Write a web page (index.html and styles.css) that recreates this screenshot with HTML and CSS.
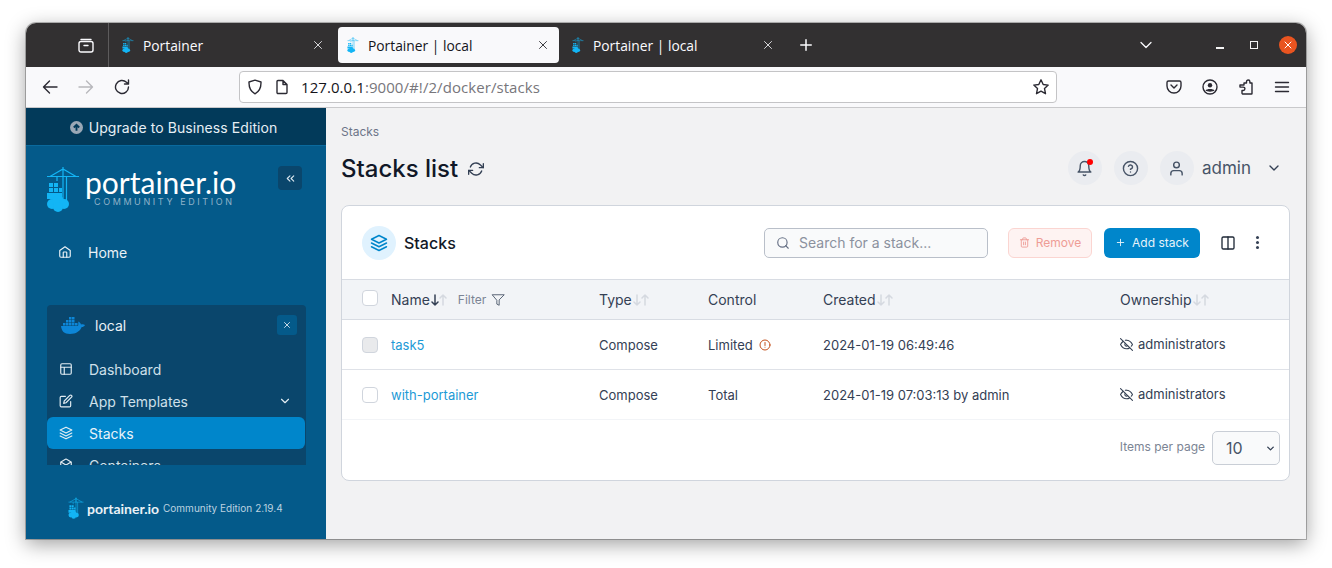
FILE: index.html
```html
<!DOCTYPE html>
<html lang="en">
<head>
  <meta charset="UTF-8" />
  <title>Portainer | local</title>
  <link rel="stylesheet" href="styles.css">
</head>
<body>
  <svg class="sprite" aria-hidden="true">
    <symbol id="i-home" viewBox="0 0 24 24"><path d="M3 9.500 12 3l9 6.500V19a2 2 0 0 1-2 2H5a2 2 0 0 1-2-2z"/><path d="M9 21v-8a1 1 0 0 1 1-1h4a1 1 0 0 1 1 1v8"/></symbol>
    <symbol id="i-layout" viewBox="0 0 24 24"><rect x="3" y="3" width="18" height="18" rx="2"/><path d="M3 9h18M9 21V9"/></symbol>
    <symbol id="i-edit" viewBox="0 0 24 24"><path d="M11 4H4a2 2 0 0 0-2 2v14a2 2 0 0 0 2 2h14a2 2 0 0 0 2-2v-7"/><path d="M18.500 2.500a2.121 2.121 0 0 1 3 3L12 15l-4 1 1-4z"/></symbol>
    <symbol id="i-layers" viewBox="0 0 24 24"><path d="M12 2 2 7l10 5 10-5z"/><path d="m2 17 10 5 10-5"/><path d="m2 12 10 5 10-5"/></symbol>
    <symbol id="i-box" viewBox="0 0 24 24"><path d="M21 16V8a2 2 0 0 0-1-1.730l-7-4a2 2 0 0 0-2 0l-7 4A2 2 0 0 0 3 8v8a2 2 0 0 0 1 1.730l7 4a2 2 0 0 0 2 0l7-4A2 2 0 0 0 21 16z"/><path d="M3.270 6.960 12 12l8.730-5.040M12 22V12"/></symbol>
    <symbol id="i-refresh" viewBox="0 0 24 24"><path d="M23 4v6h-6M1 20v-6h6"/><path d="M3.510 9a9 9 0 0 1 14.850-3.360L23 10M1 14l4.640 4.360A9 9 0 0 0 20.490 15"/></symbol>
    <symbol id="i-bell" viewBox="0 0 24 24"><path d="M18 8A6 6 0 0 0 6 8c0 7-3 9-3 9h18s-3-2-3-9"/><path d="M13.730 21a2 2 0 0 1-3.460 0"/></symbol>
    <symbol id="i-help" viewBox="0 0 24 24"><circle cx="12" cy="12" r="10"/><path d="M9.090 9a3 3 0 0 1 5.830 1c0 2-3 3-3 3M12 17h.01"/></symbol>
    <symbol id="i-user" viewBox="0 0 24 24"><path d="M20 21v-2a4 4 0 0 0-4-4H8a4 4 0 0 0-4 4v2"/><circle cx="12" cy="7" r="4"/></symbol>
    <symbol id="i-chevron" viewBox="0 0 24 24"><path d="m6 9 6 6 6-6"/></symbol>
    <symbol id="i-chevrons-left" viewBox="0 0 24 24"><path d="m11 17-5-5 5-5M18 17l-5-5 5-5"/></symbol>
    <symbol id="i-close" viewBox="0 0 24 24"><path d="M18 6 6 18M6 6l12 12"/></symbol>
    <symbol id="i-search" viewBox="0 0 24 24"><circle cx="11" cy="11" r="8"/><path d="m21 21-4.350-4.350"/></symbol>
    <symbol id="i-trash" viewBox="0 0 24 24"><path d="M3 6h18"/><path d="M19 6v14a2 2 0 0 1-2 2H7a2 2 0 0 1-2-2V6m3 0V4a2 2 0 0 1 2-2h4a2 2 0 0 1 2 2v2"/><path d="M10 11v6M14 11v6"/></symbol>
    <symbol id="i-plus" viewBox="0 0 24 24"><path d="M12 5v14M5 12h14"/></symbol>
    <symbol id="i-columns" viewBox="0 0 24 24"><rect x="3" y="3" width="18" height="18" rx="2"/><path d="M12 3v18"/></symbol>
    <symbol id="i-filter" viewBox="0 0 24 24"><path d="M22 3H2l8 9.460V19l4 2v-8.540z"/></symbol>
    <symbol id="i-eye-off" viewBox="0 0 24 24"><path d="M17.940 17.940A10.070 10.070 0 0 1 12 20c-7 0-11-8-11-8a18.450 18.450 0 0 1 5.060-5.940M9.900 4.240A9.120 9.120 0 0 1 12 4c7 0 11 8 11 8a18.500 18.500 0 0 1-2.160 3.190m-6.720-1.070a3 3 0 1 1-4.240-4.240"/><path d="m1 1 22 22"/></symbol>
    <symbol id="i-alert" viewBox="0 0 24 24"><circle cx="12" cy="12" r="10"/><path d="M12 7v6M12 16.500h.01"/></symbol>
    <symbol id="i-down" viewBox="0 0 8 12"><path d="M4 1v10M1 8l3 3 3-3"/></symbol>
    <symbol id="i-up" viewBox="0 0 8 12"><path d="M4 11V1M1 4l3-3 3 3"/></symbol>
    <symbol id="i-logo" viewBox="0 0 34 46">
      <path class="logo-line" d="M1 10.500h32M17 1v10M4 10.500 17 3l13 7.500M17 1v33M20.500 10.500v24M11 11v4"/>
      <path class="logo-fill" d="M3 17h4v4H3zM8 17h4v4H8zM3 22h4v4H3zM8 22h4v4H8zM13 22h3v4h-3zM1 27h15v6H1z"/>
      <circle class="logo-fill" cx="6" cy="38" r="5"/><circle class="logo-fill" cx="12" cy="35.500" r="6"/><circle class="logo-fill" cx="18" cy="38" r="5"/><circle class="logo-fill" cx="12" cy="41" r="5"/>
    </symbol>
  </svg>

  <div class="window">
    <div class="tabbar">
      <div class="tab-view">
        <svg class="ff-icon light" width="16" height="16" viewBox="0 0 16 16"><rect x="1" y="4.500" width="14" height="10.500" rx="2"/><path d="M3 2.500h10M6 8.500h4"/></svg>
      </div>
      <div class="tab">
        <svg class="tab-logo" width="14" height="16"><use href="#i-logo"/></svg>
        <span class="tab-title">Portainer</span>
        <svg class="icon tab-x" width="16" height="16"><use href="#i-close"/></svg>
      </div>
      <div class="tab active">
        <svg class="tab-logo" width="14" height="16"><use href="#i-logo"/></svg>
        <span class="tab-title">Portainer | local</span>
        <svg class="icon tab-x" width="16" height="16"><use href="#i-close"/></svg>
      </div>
      <div class="tab">
        <svg class="tab-logo" width="14" height="16"><use href="#i-logo"/></svg>
        <span class="tab-title">Portainer | local</span>
        <svg class="icon tab-x" width="16" height="16"><use href="#i-close"/></svg>
      </div>
      <svg class="icon new-tab" width="18" height="18"><use href="#i-plus"/></svg>
      <svg class="icon tab-list" width="20" height="20"><use href="#i-chevron"/></svg>
      <div class="win-controls">
        <span class="win-min"></span>
        <span class="win-max"></span>
        <span class="win-close"><svg class="icon" width="14" height="14"><use href="#i-close"/></svg></span>
      </div>
    </div>

    <div class="toolbar">
      <svg class="ff-icon" width="16" height="16" viewBox="0 0 16 16"><path d="M15 8H1.500M7.500 2l-6 6 6 6"/></svg>
      <svg class="ff-icon faded" width="16" height="16" viewBox="0 0 16 16"><path d="M1 8h13.500M8.500 2l6 6-6 6"/></svg>
      <svg class="ff-icon" width="16" height="16" viewBox="0 0 16 16"><path d="M14.500 8a6.500 6.500 0 1 1-2-4.700L14.500 5M14.500 1v4h-4"/></svg>
      <div class="urlbar">
        <svg class="ff-icon" width="16" height="16" viewBox="0 0 16 16"><path d="M8 1.200 14 3c.2 5.500-1.500 9.500-6 11.800C3.500 12.500 1.800 8.500 2 3z"/></svg>
        <svg class="ff-icon" width="14" height="16" viewBox="0 0 14 16"><path d="M2 2.500a1 1 0 0 1 1-1h5l4 4v8a1 1 0 0 1-1 1H3a1 1 0 0 1-1-1zM8 1.500v4h4"/></svg>
        <span class="url"><b>127.0.0.1</b>:9000/#!/2/docker/stacks</span>
        <svg class="ff-icon" width="18" height="18" viewBox="0 0 18 18"><path d="m9 1.800 2.200 4.700 5 .6-3.700 3.500 1 5.100L9 13.200l-4.500 2.500 1-5.100L1.800 7.100l5-.6z"/></svg>
      </div>
      <div class="toolbar-right">
        <svg class="ff-icon" width="16" height="16" viewBox="0 0 16 16"><path d="M2.500 2h11A1.500 1.500 0 0 1 15 3.500V7a7 7 0 0 1-14 0V3.500A1.500 1.500 0 0 1 2.500 2zM5 6l3 3 3-3"/></svg>
        <svg class="ff-icon" width="16" height="16" viewBox="0 0 16 16"><circle cx="8" cy="8" r="7"/><circle class="solid" cx="8" cy="6.200" r="2.200"/><path class="solid" d="M3.500 11.500c1-2 8-2 9 0-1.500 1.500-7.500 1.500-9 0z"/></svg>
        <svg class="ff-icon" width="16" height="16" viewBox="0 0 16 16"><path d="M6 4h2.500V2.700a1.700 1.700 0 0 1 3.400 0V4H14v10.500a.5.500 0 0 1-.5.500H5a1 1 0 0 1-1-1v-2.500h1.200a1.700 1.700 0 0 0 0-3.400H2V6h4z"/></svg>
        <svg class="ff-icon" width="16" height="16" viewBox="0 0 16 16"><path d="M1.500 3.500h13M1.500 8h13M1.500 12.500h13"/></svg>
      </div>
    </div>

    <div class="app">
      <aside class="sidebar">
        <div class="upgrade">
          <svg class="upgrade-icon" width="13" height="13" viewBox="0 0 24 24"><circle cx="12" cy="12" r="12"/><path d="m7 12 5-5 5 5M12 7.500V18"/></svg>
          <span>Upgrade to Business Edition</span>
        </div>
        <div class="brand">
          <svg class="brand-logo" width="34" height="46"><use href="#i-logo"/></svg>
          <div class="brand-text">
            <div class="brand-name">portainer.io</div>
            <div class="brand-sub">COMMUNITY EDITION</div>
          </div>
          <button class="collapse" aria-label="Collapse"><svg class="icon" width="13" height="13"><use href="#i-chevrons-left"/></svg></button>
        </div>
        <a class="nav-home">
          <svg class="icon" width="14" height="14"><use href="#i-home"/></svg>
          <span>Home</span>
        </a>
        <div class="env">
          <div class="env-head">
            <svg class="whale" width="24" height="17" viewBox="0 0 24 17"><path d="M5 3h2.500v2.500H5zM8 3h2.500v2.500H8zM11 3h2.500v2.500H11zM8 0h2.500v2.500H8zM11 0h2.500v2.500H11zM2 6h2.500v2.500H2zM5 6h2.500v2.500H5zM8 6h2.500v2.500H8zM11 6h2.500v2.500H11zM14 6h2.500v2.500H14z"/><path d="M0 9h17c.5-1 .2-3 .3-4.500 1.200.5 2.400 1.800 2.700 3 1.200-.5 2.800-.4 4 .4-.7 1.500-2 2-3.300 2.200C19 14.500 15 17 9 17 3 17 .5 14 0 9z"/></svg>
            <span class="env-name">local</span>
            <button class="env-close" aria-label="Close"><svg class="icon" width="10" height="10"><use href="#i-close"/></svg></button>
          </div>
          <a class="nav-item"><svg class="icon" width="14" height="14"><use href="#i-layout"/></svg><span>Dashboard</span></a>
          <a class="nav-item"><svg class="icon" width="14" height="14"><use href="#i-edit"/></svg><span>App Templates</span><svg class="icon nav-caret" width="14" height="14"><use href="#i-chevron"/></svg></a>
          <a class="nav-item current"><svg class="icon" width="14" height="14"><use href="#i-layers"/></svg><span>Stacks</span></a>
          <a class="nav-item"><svg class="icon" width="14" height="14"><use href="#i-box"/></svg><span>Containers</span></a>
        </div>
        <div class="side-foot">
          <svg width="16" height="22"><use href="#i-logo"/></svg>
          <span class="foot-name">portainer.io</span>
          <span class="foot-meta">Community Edition</span>
          <span class="foot-meta foot-version">2.19.4</span>
        </div>
      </aside>

      <main class="content">
        <div class="crumb">Stacks</div>
        <div class="page-head">
          <h1>Stacks list</h1>
          <svg class="icon title-refresh" width="16" height="16"><use href="#i-refresh"/></svg>
          <div class="user-menu">
            <span class="round"><svg class="icon" width="17" height="17"><use href="#i-bell"/></svg><i class="dot"></i></span>
            <span class="round"><svg class="icon" width="17" height="17"><use href="#i-help"/></svg></span>
            <span class="round"><svg class="icon" width="17" height="17"><use href="#i-user"/></svg></span>
            <span class="user-name">admin</span>
            <svg class="icon user-caret" width="16" height="16"><use href="#i-chevron"/></svg>
          </div>
        </div>

        <section class="card">
          <div class="card-head">
            <span class="card-badge"><svg class="icon" width="18" height="18"><use href="#i-layers"/></svg></span>
            <h2>Stacks</h2>
            <div class="search">
              <svg class="icon" width="14" height="14"><use href="#i-search"/></svg>
              <span>Search for a stack...</span>
            </div>
            <button class="btn btn-remove"><svg class="icon" width="11" height="11"><use href="#i-trash"/></svg>Remove</button>
            <button class="btn btn-add"><svg class="icon" width="11" height="11"><use href="#i-plus"/></svg>Add stack</button>
            <svg class="icon head-tool" width="16" height="16"><use href="#i-columns"/></svg>
            <span class="kebab"><i></i><i></i><i></i></span>
          </div>

          <table class="stacks">
            <colgroup><col class="c-check"><col class="c-name"><col class="c-type"><col class="c-control"><col class="c-created"><col></colgroup>
            <thead>
              <tr>
                <th><span class="check"></span></th>
                <th>Name<span class="sort"><svg class="icon active" width="8" height="12"><use href="#i-down"/></svg><svg class="icon" width="8" height="12"><use href="#i-up"/></svg></span><span class="filter">Filter<svg class="icon" width="14" height="14"><use href="#i-filter"/></svg></span></th>
                <th>Type<span class="sort"><svg class="icon" width="8" height="12"><use href="#i-down"/></svg><svg class="icon" width="8" height="12"><use href="#i-up"/></svg></span></th>
                <th>Control</th>
                <th>Created<span class="sort"><svg class="icon" width="8" height="12"><use href="#i-down"/></svg><svg class="icon" width="8" height="12"><use href="#i-up"/></svg></span></th>
                <th>Ownership<span class="sort"><svg class="icon" width="8" height="12"><use href="#i-down"/></svg><svg class="icon" width="8" height="12"><use href="#i-up"/></svg></span></th>
              </tr>
            </thead>
            <tbody>
              <tr>
                <td><span class="check off"></span></td>
                <td><a class="stack-link">task5</a></td>
                <td>Compose</td>
                <td>Limited <svg class="icon warn" width="12" height="12"><use href="#i-alert"/></svg></td>
                <td>2024-01-19 06:49:46</td>
                <td class="owner"><svg class="icon" width="13" height="13"><use href="#i-eye-off"/></svg>administrators</td>
              </tr>
              <tr>
                <td><span class="check"></span></td>
                <td><a class="stack-link">with-portainer</a></td>
                <td>Compose</td>
                <td>Total</td>
                <td>2024-01-19 07:03:13 by admin</td>
                <td class="owner"><svg class="icon" width="13" height="13"><use href="#i-eye-off"/></svg>administrators</td>
              </tr>
            </tbody>
          </table>

          <div class="card-foot">
            <span class="foot-label">Items per page</span>
            <div class="per-page">10<svg class="icon" width="11" height="11"><use href="#i-chevron"/></svg></div>
          </div>
        </section>
      </main>
    </div>
  </div>
</body>
</html>
```

FILE: styles.css
```css
* {
  box-sizing: border-box;
}

html, body {
  height: 100%;
}

body {
  margin: 0;
  padding: 23px 26px 28px;
  background-color: #ffffff;
  font-family: Inter, "Liberation Sans", sans-serif;
  overflow: hidden;
}

.sprite {
  display: none;
}

.icon {
  fill: none;
  stroke: currentColor;
  stroke-width: 2;
  stroke-linecap: round;
  stroke-linejoin: round;
  flex: none;
}

.window {
  height: 516px;
  display: flex;
  flex-direction: column;
  border-radius: 10px 10px 0 0;
  overflow: hidden;
  box-shadow: 0 0 0 1px rgba(0, 0, 0, 0.25), 0 5px 20px rgba(0, 0, 0, 0.38);
}

/* browser chrome */
.tabbar {
  height: 44px;
  flex: none;
  display: flex;
  align-items: center;
  background-color: #323031;
  color: #fbfbfe;
  font-family: "Open Sans", sans-serif;
}

.tab-view {
  width: 83px;
  height: 44px;
  display: flex;
  align-items: center;
  justify-content: flex-end;
  padding-right: 14px;
  border-right: 1px solid #5d5b5c;
}

.ff-icon {
  fill: none;
  stroke: #2b2a33;
  stroke-width: 1.4;
  stroke-linecap: round;
  stroke-linejoin: round;
  flex: none;
}

.ff-icon.light {
  stroke: #fbfbfe;
}

.ff-icon.faded {
  stroke: #b8b8bc;
}

.ff-icon .solid {
  fill: #2b2a33;
  stroke: none;
}

.tab {
  width: 221px;
  height: 36px;
  margin-left: 4px;
  display: flex;
  align-items: center;
  padding: 0 9px 0 8px;
  border-radius: 4px;
  font-size: 13.8px;
}

.tab.active {
  background-color: #f9f9fb;
  color: #15141a;
}

.tab-logo {
  flex: none;
}

.tab-title {
  margin-left: 8px;
  flex: 1;
}

.tab-x {
  width: 14px;
  height: 14px;
  stroke-width: 1.4;
}

.new-tab {
  margin-left: 13px;
}

.tab-list {
  margin-left: 321px;
  stroke-width: 1.5;
}

.win-controls {
  margin-left: auto;
  display: flex;
  align-items: center;
  gap: 26px;
  padding-right: 9px;
}

.win-min {
  width: 8px;
  height: 1.5px;
  margin-top: 6px;
  background-color: #f4f4f4;
}

.win-max {
  width: 8px;
  height: 8px;
  border: 1.5px solid #f4f4f4;
}

.win-close {
  width: 18px;
  height: 18px;
  margin-left: -5px;
  display: flex;
  align-items: center;
  justify-content: center;
  border-radius: 50%;
  background-color: #e95420;
  color: #ffffff;
}

.win-close svg {
  width: 12px;
  height: 12px;
}

.toolbar {
  height: 41px;
  flex: none;
  display: flex;
  align-items: center;
  padding-left: 16px;
  gap: 20px;
  background-color: #f9f9fb;
  border-bottom: 1px solid #c9c9cb;
}

.urlbar {
  width: 818px;
  height: 32px;
  margin-left: 89px;
  display: flex;
  align-items: center;
  padding: 0 6px 0 7px;
  gap: 12px;
  background-color: #ffffff;
  border: 1px solid #c4c4c6;
  border-radius: 4px;
  font-family: "Open Sans", sans-serif;
}

.url {
  flex: 1;
  font-size: 15px;
  letter-spacing: 0.07px;
  color: #77767b;
}

.url b {
  font-weight: 400;
  color: #15141a;
}

.toolbar-right {
  margin-left: 89px;
  display: flex;
  gap: 20px;
}

/* sidebar */
.app {
  flex: 1;
  min-height: 0;
  display: flex;
  background-color: #f2f2f3;
}

.sidebar {
  width: 300px;
  flex: none;
  display: flex;
  flex-direction: column;
  background-color: #045a8a;
  color: #ffffff;
}

.upgrade {
  height: 38px;
  display: flex;
  align-items: center;
  justify-content: center;
  gap: 6px;
  padding: 1px 5px 0 0;
  background-color: #023a5a;
  border-bottom: 1px solid #0a6a9e;
  font-size: 14px;
  letter-spacing: 0.08px;
  color: #e6eff5;
}

.upgrade-icon circle {
  fill: #9aa8b6;
}

.upgrade-icon path {
  fill: none;
  stroke: #023a5a;
  stroke-width: 3.5;
}

.brand {
  height: 90px;
  display: flex;
  align-items: flex-start;
  padding: 20px 24px 0 20px;
}

.logo-line {
  fill: none;
  stroke: #13b5f5;
  stroke-width: 1.2;
}

.logo-fill {
  fill: #13b5f5;
}

.brand-text {
  margin: 2px 0 0 5px;
  flex: 1;
}

.brand-name {
  font-family: Lato, sans-serif;
  font-size: 30px;
  line-height: 28px;
}

.brand-sub {
  margin-left: 9px;
  font-size: 9px;
  line-height: 11px;
  letter-spacing: 2.6px;
  color: #8fb2c9;
}

.collapse {
  width: 24px;
  height: 24px;
  padding: 0;
  display: flex;
  align-items: center;
  justify-content: center;
  background-color: #0a466c;
  border: 0;
  border-radius: 4px;
  color: #dce8f0;
}

.nav-home {
  height: 32px;
  display: flex;
  align-items: center;
  gap: 16px;
  padding-left: 32px;
  font-size: 14px;
  color: #eaf1f6;
}

.env {
  width: 259px;
  height: 160px;
  margin: 37px 0 0 21px;
  overflow: hidden;
  background-color: #0a466c;
  border-radius: 4px 4px 0 0;
  font-size: 14px;
}

.env-head {
  height: 48px;
  display: flex;
  align-items: center;
  padding: 0 9px 8px 14px;
}

.whale {
  fill: #0d86d7;
}

.env-name {
  margin-left: 10px;
  flex: 1;
  color: #eaf1f6;
}

.env-close {
  width: 20px;
  height: 20px;
  padding: 0;
  display: flex;
  align-items: center;
  justify-content: center;
  background-color: #045a8a;
  border: 0;
  border-radius: 3px;
  color: #eaf1f6;
}

.nav-item {
  height: 32px;
  display: flex;
  align-items: center;
  gap: 16px;
  padding: 0 14px 0 12px;
  color: #cfe0ea;
}

.nav-item .icon {
  color: #e3edf3;
}

.nav-item.current {
  background-color: #0086cb;
  border-radius: 6px;
  margin-right: 1px;
  color: #e9f3f9;
}

.nav-caret {
  margin-left: auto;
}

.side-foot {
  margin-top: 32px;
  display: flex;
  align-items: center;
  padding-left: 42px;
}

.foot-name {
  margin-left: 3px;
  font-family: Lato, sans-serif;
  font-size: 14px;
  font-weight: 700;
  color: #eaf1f6;
}

.foot-meta {
  margin-left: 4px;
  font-size: 10px;
  color: #bcd2e0;
}

.foot-version {
  margin-left: 3px;
}

/* main content */
.content {
  flex: 1;
  min-width: 0;
  padding: 17px 16px 0 15px;
  color: #1f2937;
}

.crumb {
  font-size: 12px;
  line-height: 14px;
  color: #6d7588;
}

.page-head {
  height: 36px;
  margin-top: 11px;
  display: flex;
  align-items: center;
}

h1 {
  margin: 0;
  font-size: 24px;
  font-weight: 500;
  color: #111827;
}

.title-refresh {
  margin: 1px 0 0 10px;
  color: #344054;
}

.user-menu {
  margin-left: auto;
  display: flex;
  align-items: center;
  gap: 12px;
  padding-right: 8px;
  color: #475467;
}

.round {
  position: relative;
  width: 34px;
  height: 34px;
  display: flex;
  align-items: center;
  justify-content: center;
  background-color: #eaecf0;
  border-radius: 50%;
}

.dot {
  position: absolute;
  top: 8px;
  right: 9px;
  width: 6px;
  height: 6px;
  background-color: #ff0000;
  border-radius: 50%;
}

.user-name {
  margin-left: -4px;
  font-size: 17px;
}

.user-caret {
  margin-left: 3px;
  color: #344054;
}

.card {
  margin-top: 19px;
  height: 276px;
  background-color: #ffffff;
  border: 1px solid #d0d5dd;
  border-radius: 8px;
  overflow: hidden;
}

.card-head {
  height: 73px;
  display: flex;
  align-items: center;
  padding: 0 30px 0 20px;
}

.card-badge {
  width: 34px;
  height: 34px;
  display: flex;
  align-items: center;
  justify-content: center;
  background-color: #e0f2fe;
  border-radius: 50%;
  color: #0086cb;
}

h2 {
  margin: 0 0 0 8px;
  flex: 1;
  font-size: 16px;
  font-weight: 500;
  color: #111827;
}

.search {
  width: 224px;
  height: 30px;
  display: flex;
  align-items: center;
  gap: 9px;
  padding-left: 11px;
  background-color: #f9fafb;
  border: 1px solid #b9bfc9;
  border-radius: 5px;
  font-size: 14px;
  color: #8b919e;
}

.search .icon {
  color: #667085;
}

.btn {
  height: 30px;
  display: flex;
  align-items: center;
  justify-content: center;
  gap: 6px;
  border-radius: 6px;
  font-family: inherit;
  font-size: 12px;
}

.btn-remove {
  width: 84px;
  margin-left: 20px;
  background-color: #fef3f2;
  border: 1px solid #fbd5d1;
  color: #ee9d96;
}

.btn-add {
  width: 96px;
  margin-left: 12px;
  background-color: #0086cb;
  border: 0;
  color: #e6f3fa;
}

.head-tool {
  margin-left: 20px;
  color: #1f2937;
}

.kebab {
  margin-left: 20px;
  display: flex;
  flex-direction: column;
  gap: 2px;
}

.kebab i {
  width: 3px;
  height: 3px;
  background-color: #344054;
  border-radius: 50%;
}

.stacks {
  width: 100%;
  table-layout: fixed;
  border-collapse: collapse;
  font-size: 13px;
  color: #344054;
}

.c-check {
  width: 49px;
}

.c-name {
  width: 208px;
}

.c-type {
  width: 109px;
}

.c-control {
  width: 115px;
}

.c-created {
  width: 297px;
}

th {
  height: 40px;
  padding: 0;
  text-align: left;
  font-size: 14px;
  font-weight: 400;
  background-color: #f2f4f7;
  border-top: 1px solid #d8dce3;
  border-bottom: 1px solid #d8dce3;
  white-space: nowrap;
}

td {
  height: 50px;
  padding: 0;
  border-bottom: 1px solid #dfe2e8;
  white-space: nowrap;
}

tbody tr:last-child td {
  border-bottom-color: #f2f4f7;
}

th:first-child, td:first-child {
  padding-left: 20px;
}

.check {
  display: block;
  width: 16px;
  height: 16px;
  background-color: #ffffff;
  border: 1px solid #d0d5dd;
  border-radius: 4px;
}

thead .check {
  margin-top: -3px;
}

.check.off {
  background-color: #e9eaec;
}

.sort {
  margin-left: 1px;
  display: inline-flex;
  vertical-align: -1px;
  color: #d5d9e0;
}

.sort .icon {
  stroke-width: 1.5;
}

.sort .active {
  color: #344054;
}

.filter {
  margin-left: 11px;
  display: inline-flex;
  align-items: center;
  gap: 5px;
  font-size: 12px;
  color: #7b8494;
  vertical-align: 1px;
}

.filter .icon {
  stroke-width: 1.5;
  color: #475467;
}

.stack-link {
  color: #1d9ad6;
}

.warn {
  margin-left: 3px;
  vertical-align: -1px;
  color: #c4501b;
}

td.owner {
  padding-bottom: 2px;
}

.owner .icon {
  margin-right: 5px;
  vertical-align: -2px;
}

.card-foot {
  height: 60px;
  display: flex;
  align-items: center;
  justify-content: flex-end;
  gap: 7px;
  padding: 0 9px 4px 0;
  font-size: 12px;
  color: #7b8494;
}

.foot-label {
  margin-bottom: 4px;
}

.per-page {
  width: 68px;
  height: 34px;
  display: flex;
  align-items: center;
  justify-content: space-between;
  padding: 0 3px 0 13px;
  background-color: #f9fafb;
  border: 1px solid #c9ced6;
  border-radius: 5px;
  font-size: 16px;
  color: #475467;
}

.per-page .icon {
  stroke-width: 3;
  color: #344054;
}
```
